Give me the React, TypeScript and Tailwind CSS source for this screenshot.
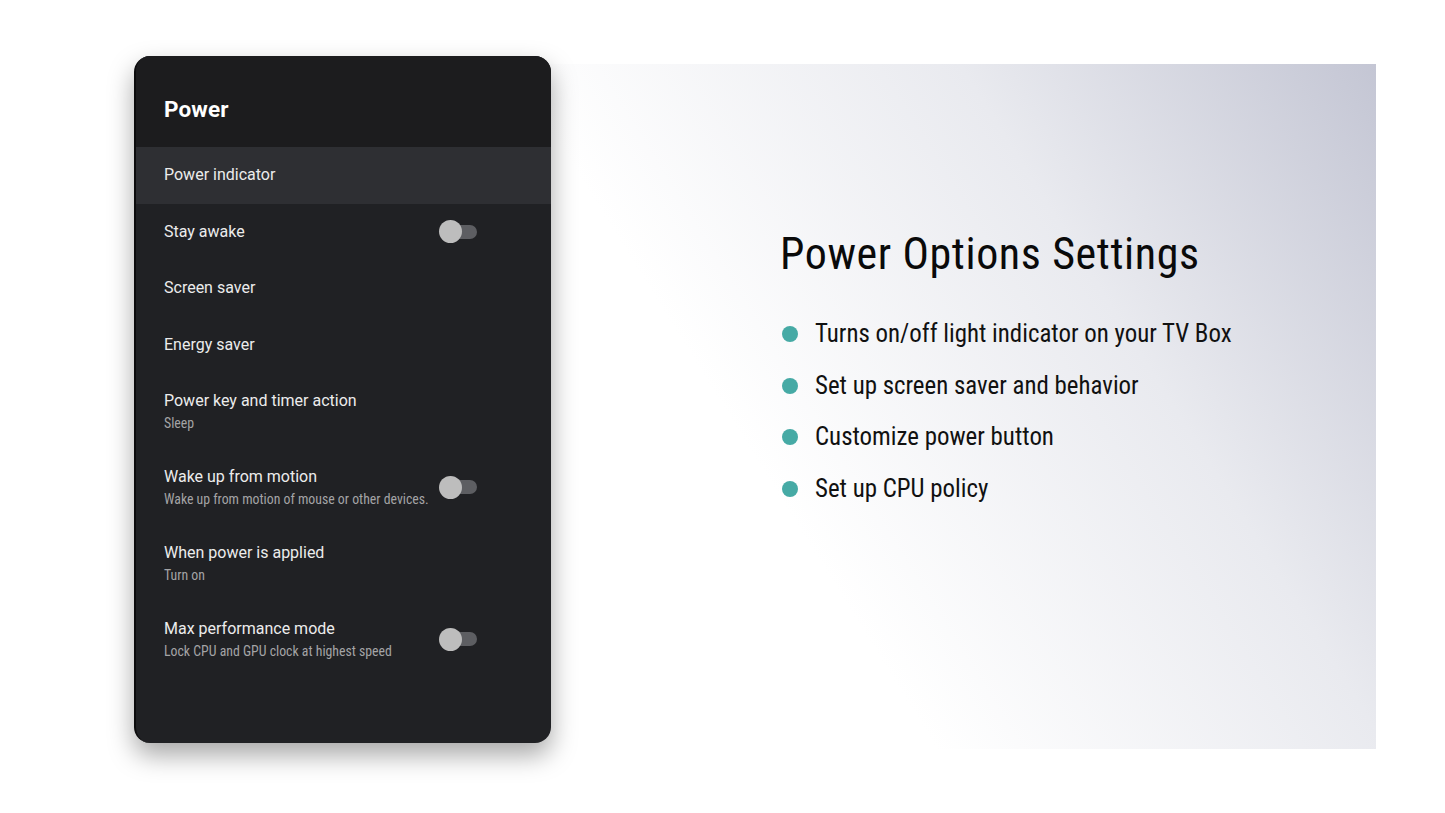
import React from "react";

const Toggle = () => (
  <div className="relative w-[38px] h-[22px] flex items-center">
    <div className="absolute left-[6px] right-0 h-[14px] rounded-full bg-[#5d5e62]" />
    <div className="absolute left-0 w-[23px] h-[23px] rounded-full bg-[#bdbdbd]" />
  </div>
);

type Item = { title: string; sub?: string; toggle?: boolean; active?: boolean };

const items: Item[] = [
  { title: "Power indicator", active: true },
  { title: "Stay awake", toggle: true },
  { title: "Screen saver" },
  { title: "Energy saver" },
  { title: "Power key and timer action", sub: "Sleep" },
  { title: "Wake up from motion", sub: "Wake up from motion of mouse or other devices.", toggle: true },
  { title: "When power is applied", sub: "Turn on" },
  { title: "Max performance mode", sub: "Lock CPU and GPU clock at highest speed", toggle: true },
];

export default function App() {
  return (
    <div className="w-[1445px] h-[813px] bg-white pt-[64px] pl-[69px] font-['Roboto',sans-serif]">
      <div className="w-[1307px] h-[685px] flex bg-[linear-gradient(58deg,#ffffff_0%,#ffffff_50%,#e9eaef_76%,#c4c6d4_100%)]">
        <div className="ml-[65px] -mt-[8px] w-[417px] h-[687px] rounded-[16px] bg-[#202124] overflow-hidden flex flex-col shadow-[0_12px_26px_rgba(0,0,0,0.35)] border-l-[2px] border-[#0c0c0d]">
          <div className="h-[91px] bg-[#1c1c1e] flex items-center pl-[28px] pt-[16px] shrink-0">
            <span className="text-[22.5px] font-bold text-white tracking-[0.1px]">Power</span>
          </div>
          {items.map((it, i) => (
            <div
              key={i}
              className={`flex items-center pl-[28px] pr-[74px] shrink-0 ${it.sub ? "h-[76px]" : "h-[56.5px]"} ${it.active ? "bg-[#2e2f33]" : ""}`}
            >
              <div className="flex-1 flex flex-col">
                <span className="text-[16px] text-[#ececec] leading-[22px]">{it.title}</span>
                {it.sub && (
                  <span className="text-[13.8px] text-[#a4a4a6] leading-[18px] mt-[2px] font-stretch-condensed">
                    {it.sub}
                  </span>
                )}
              </div>
              {it.toggle && <Toggle />}
            </div>
          ))}
        </div>
        <div className="ml-[229px] mt-[162px] flex flex-col font-stretch-condensed">
          <h1 className="text-[44px] leading-[56px] text-[#0a0a0a] tracking-[0.6px] font-normal">Power Options Settings</h1>
          <ul className="mt-[35px] flex flex-col gap-[17.5px]">
            {[
              "Turns on/off light indicator on your TV Box",
              "Set up screen saver and behavior",
              "Customize power button",
              "Set up CPU policy",
            ].map((t) => (
              <li key={t} className="flex items-center h-[34px]">
                <span className="w-[16px] h-[16px] rounded-full bg-[#46aaa5] ml-[2px] mr-[17px]" />
                <span className="text-[24.9px] text-[#111] tracking-[0px]">{t}</span>
              </li>
            ))}
          </ul>
        </div>
      </div>
    </div>
  );
}
